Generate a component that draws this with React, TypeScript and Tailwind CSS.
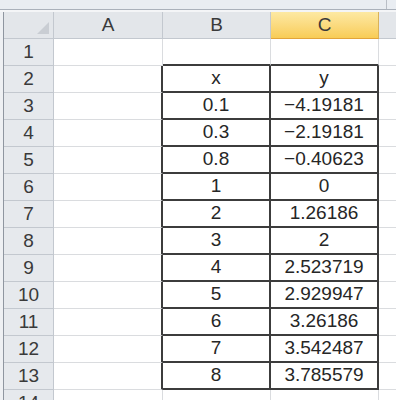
import React from 'react';

const rows: [string, string][] = [
    ['x', 'y'],
    ['0.1', '−4.19181'],
    ['0.3', '−2.19181'],
    ['0.8', '−0.40623'],
    ['1', '0'],
    ['2', '1.26186'],
    ['3', '2'],
    ['4', '2.523719'],
    ['5', '2.929947'],
    ['6', '3.26186'],
    ['7', '3.542487'],
    ['8', '3.785579'],
];

const cols = 'grid grid-cols-[4px_50px_109px_108px_108px_1fr]';

function RowHeader({ n }: { n: number }) {
    return (
        <div className="flex h-[27px] items-center justify-center border-b border-r border-[#c3c8cf] bg-[#e6e9ed] text-[19px] text-[#3a3a3a]">
            {n}
        </div>
    );
}

export default function App() {
    return (
        <div className="h-[400px] w-[396px] overflow-hidden bg-white font-['Liberation_Sans',Arial,sans-serif]">
            <div className="relative h-[10px] border-b border-[#aab1bb] bg-[#e9edf2]">
                <div className="absolute right-[9px] top-0 h-full w-px bg-[#b9bec6]" />
            </div>
            <div className="h-[2px] bg-[#f4f5f7]" />

            {/* column headers */}
            <div className={cols}>
                <div className="h-[27px] border-r border-[#8f96a0] bg-[#eef0f3]" />
                <div className="relative h-[27px] border-b border-r border-[#c3c8cf] bg-[#e3e6ea]">
                    <div className="absolute bottom-[4px] right-[4px] h-0 w-0 border-b-[12px] border-l-[12px] border-b-[#c9cdd3] border-l-transparent" />
                </div>
                <div className="flex h-[27px] items-center justify-center border-b border-r border-[#c3c8cf] bg-[#e3e6ea] text-[19px] text-[#3a3a3a]">A</div>
                <div className="flex h-[27px] items-center justify-center border-b border-r border-[#c3c8cf] bg-[#e3e6ea] text-[19px] text-[#3a3a3a]">B</div>
                <div className="flex h-[27px] items-center justify-center border-b border-r border-b-[#e2a43a] border-r-[#d9b25a] bg-gradient-to-b from-[#fde9a3] to-[#f8cc55] text-[19px] text-[#3a3a3a]">C</div>
                <div className="h-[27px] border-b border-[#c3c8cf] bg-[#e3e6ea]" />
            </div>

            {/* row 1 */}
            <div className={cols}>
                <div className="h-[27px] border-r border-[#8f96a0] bg-[#eef0f3]" />
                <RowHeader n={1} />
                <div className="h-[27px] border-b border-r border-[#dadcdf]" />
                <div className="h-[27px] border-b-2 border-r border-b-[#3c3c3c] border-r-[#dadcdf]" />
                <div className="h-[27px] border-b-2 border-r border-b-[#3c3c3c] border-r-[#dadcdf]" />
                <div className="h-[27px] border-b border-[#dadcdf]" />
            </div>

            {rows.map(([x, y], i) => (
                <div key={i} className={cols}>
                    <div className="h-[27px] border-r border-[#8f96a0] bg-[#eef0f3]" />
                    <RowHeader n={i + 2} />
                    <div className="h-[27px] border-b border-r-2 border-b-[#dadcdf] border-r-[#3c3c3c]" />
                    <div className="flex h-[27px] items-center justify-center border-b-2 border-r-2 border-[#3c3c3c] text-[19px] text-[#262626]">{x}</div>
                    <div className="flex h-[27px] items-center justify-center border-b-2 border-r-2 border-[#3c3c3c] text-[19px] text-[#262626]">{y}</div>
                    <div className="h-[27px] border-b border-[#dadcdf]" />
                </div>
            ))}

            {/* row 14 */}
            <div className={cols}>
                <div className="h-[27px] border-r border-[#8f96a0] bg-[#eef0f3]" />
                <RowHeader n={14} />
                <div className="h-[27px] border-r border-[#dadcdf]" />
                <div className="h-[27px] border-r border-[#dadcdf]" />
                <div className="h-[27px] border-r border-[#dadcdf]" />
                <div className="h-[27px]" />
            </div>
        </div>
    );
}
